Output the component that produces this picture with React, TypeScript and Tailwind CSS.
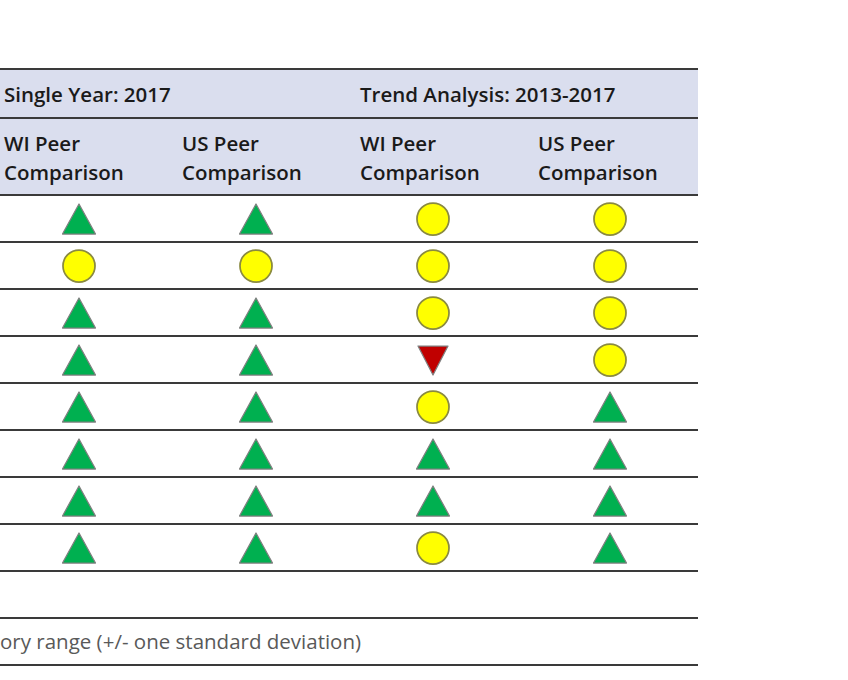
import React from 'react';

type Mark = 'up' | 'down' | 'mid';

const rows: Mark[][] = [
    ['up', 'up', 'mid', 'mid'],
    ['mid', 'mid', 'mid', 'mid'],
    ['up', 'up', 'mid', 'mid'],
    ['up', 'up', 'down', 'mid'],
    ['up', 'up', 'mid', 'up'],
    ['up', 'up', 'up', 'up'],
    ['up', 'up', 'up', 'up'],
    ['up', 'up', 'mid', 'up'],
];

// header text sits a touch further right in each column than the icons do
const headPad = ['pl-[14px]', 'pl-[15px]', 'pl-[16px]', 'pl-[17px]'];

function Indicator({ mark }: { mark: Mark }) {
    if (mark === 'mid') {
        return (
            <svg width="36" height="36" viewBox="0 0 36 36">
                <circle cx="18" cy="18" r="16" fill="#ffff00" stroke="#8a8a40" strokeWidth="1.75" />
            </svg>
        );
    }
    if (mark === 'down') {
        return (
            <svg width="34" height="32" viewBox="0 0 34 32">
                <polygon points="2,2 32,2 17,31" fill="#c00000" stroke="#7f7f7f" strokeWidth="1.25" strokeLinejoin="round" />
            </svg>
        );
    }
    return (
        <svg width="36" height="32" viewBox="0 0 36 32">
            <polygon points="18,1 34.5,31 1.5,31" fill="#00b050" stroke="#7f7f7f" strokeWidth="1.25" strokeLinejoin="round" />
        </svg>
    );
}

export default function App() {
    const font = "font-['Open_Sans','Noto_Sans',sans-serif]";
    return (
        <div className={`w-[848px] h-[680px] bg-white overflow-hidden pt-[68px] ${font}`}>
            <div className="w-[708px] -ml-[10px] border-t-2 border-[#3a3a3a]">
                {/* group header */}
                <div className="grid grid-cols-[354px_354px] h-[49px] bg-[#dadeee] border-b-2 border-[#3a3a3a] text-[20.5px] font-semibold text-[#1a1a1a]">
                    <div className="pl-[14px] pt-[2px] flex items-center">Single Year: 2017</div>
                    <div className="pl-[16px] pt-[2px] flex items-center">Trend Analysis: 2013-2017</div>
                </div>

                {/* column header */}
                <div className="grid grid-cols-[177px_177px_177px_177px] h-[77px] bg-[#dadeee] border-b-2 border-[#3a3a3a] text-[20.5px] font-semibold text-[#1a1a1a] leading-[29px]">
                    {['WI Peer', 'US Peer', 'WI Peer', 'US Peer'].map((t, i) => (
                        <div key={i} className={`${headPad[i]} pt-[10px] whitespace-nowrap`}>
                            <div>{t}</div>
                            <div>Comparison</div>
                        </div>
                    ))}
                </div>

                {rows.map((r, i) => (
                    <div key={i} className="grid grid-cols-[177px_177px_177px_177px] h-[47px] border-b-2 border-[#3a3a3a]">
                        {r.map((m, j) => (
                            <div key={j} className="flex items-center justify-center">
                                <Indicator mark={m} />
                            </div>
                        ))}
                    </div>
                ))}

                <div className="h-[47px] border-b-2 border-[#3a3a3a]" />

                <div className="h-[47px] border-b-2 border-[#3a3a3a] flex items-center pl-[10px] text-[20.5px] text-[#595959] whitespace-nowrap">
                    ory range (+/- one standard deviation)
                </div>
            </div>
        </div>
    );
}
